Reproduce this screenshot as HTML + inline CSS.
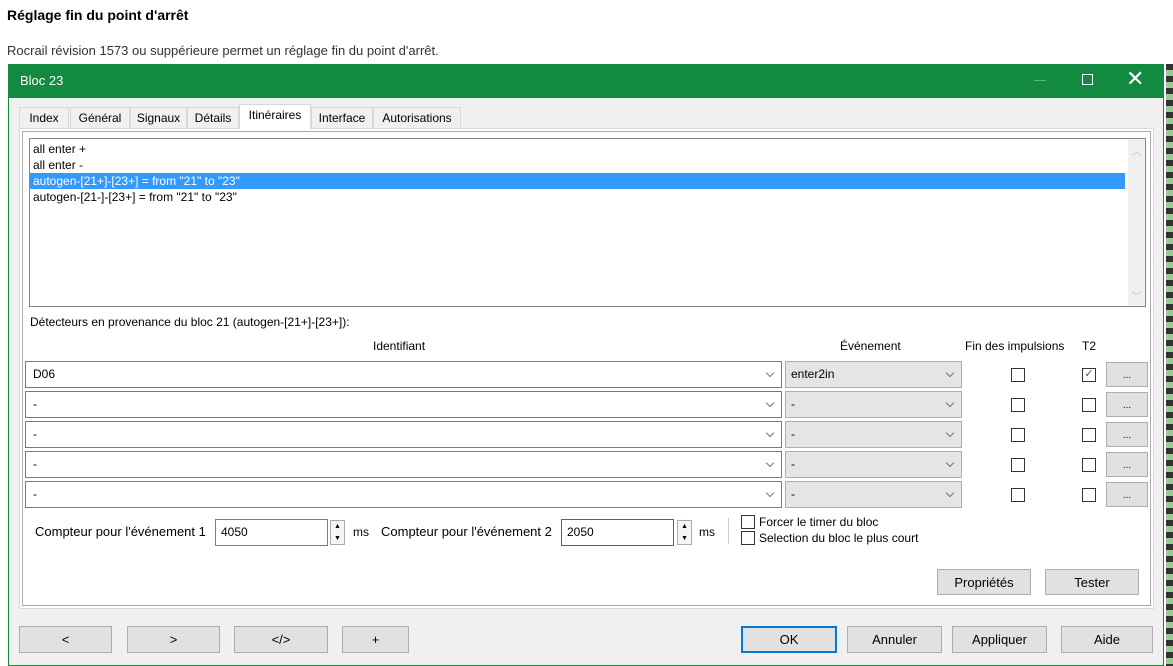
<!DOCTYPE html><html><head><meta charset="utf-8"><style>
*{box-sizing:border-box}body{margin:0;width:1173px;height:666px;background:#fff;font-family:"Liberation Sans",sans-serif;font-size:12px;color:#000;position:relative;overflow:hidden}
.a{position:absolute}
.win{left:8px;top:64px;width:1156px;height:602px;background:#f0f0f0;border:1px solid #128a3f}
.tb{left:8px;top:64px;width:1156px;height:34px;background:#128a3f;color:#fff;font-size:13px}
.tab{top:107px;height:21px;border:1px solid #d9d9d9;border-bottom:none;padding:3px 0 0;text-align:center;background:#f0f0f0}
.panel{left:19px;top:128px;width:1135px;height:481px;background:#fff;border:1px solid #d9d9d9}
.cb{height:27px;border:1px solid #7a7a7a;background:#fff;padding:5px 7px}
.cb2{height:27px;border:1px solid #adadad;background:#e5e5e5;padding:5px 5px}
.chev{position:absolute;right:8px;top:8px;width:6px;height:6px;border-right:1px solid #777;border-bottom:1px solid #777;transform:rotate(45deg)}
.chk{width:14px;height:14px;border:1px solid #333;background:#fff}
.btn{border:1px solid #adadad;background:#e1e1e1;text-align:center;padding-top:5px;font-size:13px}
.sp{width:15px;height:25px;border:1px solid #aaa;background:#f5f5f5}
</style></head><body>
<div class="a" style="left:7px;top:7px;font-weight:bold;font-size:14px">Réglage fin du point d'arrêt</div>
<div class="a" style="left:7px;top:43px;font-size:13px;color:#333">Rocrail révision 1573 ou suppérieure permet un réglage fin du point d'arrêt.</div>
<div class="a" style="left:1166px;top:64px;width:7px;height:602px;background:repeating-linear-gradient(#333 0 6px,#9c9 6px 12px)"></div>
<div class="a win"></div>
<div class="a tb"><span class="a" style="left:12px;top:9px">Bloc 23</span>
<span class="a" style="left:1026px;top:16px;width:12px;height:1px;background:#5fae7e"></span>
<span class="a" style="left:1074px;top:10px;width:11px;height:11px;border:1px solid #fff"></span>
<span class="a" style="left:1118px;top:2px;font-size:22px;font-weight:300">✕</span></div>
<div class="a tab" style="left:19px;width:50px">Index</div>
<div class="a tab" style="left:70px;width:60px">Général</div>
<div class="a tab" style="left:130px;width:57px">Signaux</div>
<div class="a tab" style="left:187px;width:52px">Détails</div>
<div class="a tab" style="left:239px;width:72px;top:104px;height:25px;background:#fff;z-index:2">Itinéraires</div>
<div class="a tab" style="left:311px;width:62px">Interface</div>
<div class="a tab" style="left:373px;width:88px">Autorisations</div>
<div class="a panel"></div>
<div class="a" style="left:22px;top:131px;width:1129px;height:475px;border:1px solid #aaa"></div>
<div class="a" style="left:29px;top:138px;width:1117px;height:169px;border:1px solid #828790;background:#fff">
<div style="padding:2px 0 0 3px;line-height:16px">all enter +<br>all enter -</div>
<div style="background:#3399ff;color:#fff;width:1095px;padding-left:3px;line-height:16px">autogen-[21+]-[23+] = from "21" to "23"</div>
<div style="padding-left:3px;line-height:16px">autogen-[21-]-[23+] = from "21" to "23"</div>
<div class="a" style="right:0;top:0;width:17px;height:167px;background:#f0f0f0;color:#bbb;text-align:center;font-size:10px"><div style="margin-top:4px">︿</div><div style="position:absolute;bottom:3px;width:17px">﹀</div></div></div>
<div class="a" style="left:30px;top:315px">Détecteurs en provenance du bloc 21 (autogen-[21+]-[23+]):</div>
<div class="a" style="left:373px;top:339px">Identifiant</div>
<div class="a" style="left:840px;top:339px">Événement</div>
<div class="a" style="left:965px;top:339px">Fin des impulsions</div>
<div class="a" style="left:1082px;top:339px">T2</div>
<div id="rows"></div>
<script>
var h='',v=[['D06','enter2in',1],['-','-',0],['-','-',0],['-','-',0],['-','-',0]];
v.forEach(function(r,i){var y=361+i*30;
h+='<div class="a cb" style="left:25px;top:'+y+'px;width:757px">'+r[0]+'<span class="chev"></span></div>';
h+='<div class="a cb2" style="left:785px;top:'+y+'px;width:177px">'+r[1]+'<span class="chev"></span></div>';
h+='<div class="a chk" style="left:1011px;top:'+(y+7)+'px"></div>';
h+='<div class="a chk" style="left:1082px;top:'+(y+7)+'px;font-size:11px;line-height:11px;color:#555;text-align:center">'+(r[2]?'✓':'')+'</div>';
h+='<div class="a btn" style="left:1106px;top:'+(y+1)+'px;width:42px;height:25px;font-size:10px;padding-top:7px">...</div>';});
document.getElementById('rows').innerHTML=h;
</script>
<div class="a" style="left:35px;top:524px;font-size:13px">Compteur pour l'événement 1</div>
<div class="a" style="left:215px;top:519px;width:113px;height:27px;border:1px solid #7a7a7a;background:#fff;padding:5px 5px">4050</div>
<div class="a sp" style="left:330px;top:520px;font-size:7px;text-align:center;line-height:12px">▲<br>▼</div>
<div class="a" style="left:353px;top:525px">ms</div>
<div class="a" style="left:381px;top:524px;font-size:13px">Compteur pour l'événement 2</div>
<div class="a" style="left:561px;top:519px;width:113px;height:27px;border:1px solid #0078d7;background:#fff;padding:5px 5px">2050</div>
<div class="a sp" style="left:677px;top:520px;font-size:7px;text-align:center;line-height:12px">▲<br>▼</div>
<div class="a" style="left:699px;top:525px">ms</div>
<div class="a" style="left:728px;top:518px;width:1px;height:26px;background:#ccc"></div>
<div class="a chk" style="left:741px;top:515px"></div><div class="a" style="left:759px;top:515px">Forcer le timer du bloc</div>
<div class="a chk" style="left:741px;top:531px"></div><div class="a" style="left:759px;top:531px">Selection du bloc le plus court</div>
<div class="a btn" style="left:937px;top:569px;width:94px;height:26px">Propriétés</div>
<div class="a btn" style="left:1045px;top:569px;width:94px;height:26px">Tester</div>
<div class="a btn" style="left:19px;top:626px;width:93px;height:27px">&lt;</div>
<div class="a btn" style="left:127px;top:626px;width:93px;height:27px">&gt;</div>
<div class="a btn" style="left:234px;top:626px;width:94px;height:27px">&lt;/&gt;</div>
<div class="a btn" style="left:342px;top:626px;width:67px;height:27px">+</div>
<div class="a btn" style="left:741px;top:626px;width:96px;height:27px;border:2px solid #0078d7;padding-top:4px">OK</div>
<div class="a btn" style="left:847px;top:626px;width:95px;height:27px">Annuler</div>
<div class="a btn" style="left:952px;top:626px;width:95px;height:27px">Appliquer</div>
<div class="a btn" style="left:1061px;top:626px;width:92px;height:27px">Aide</div>
</body></html>
